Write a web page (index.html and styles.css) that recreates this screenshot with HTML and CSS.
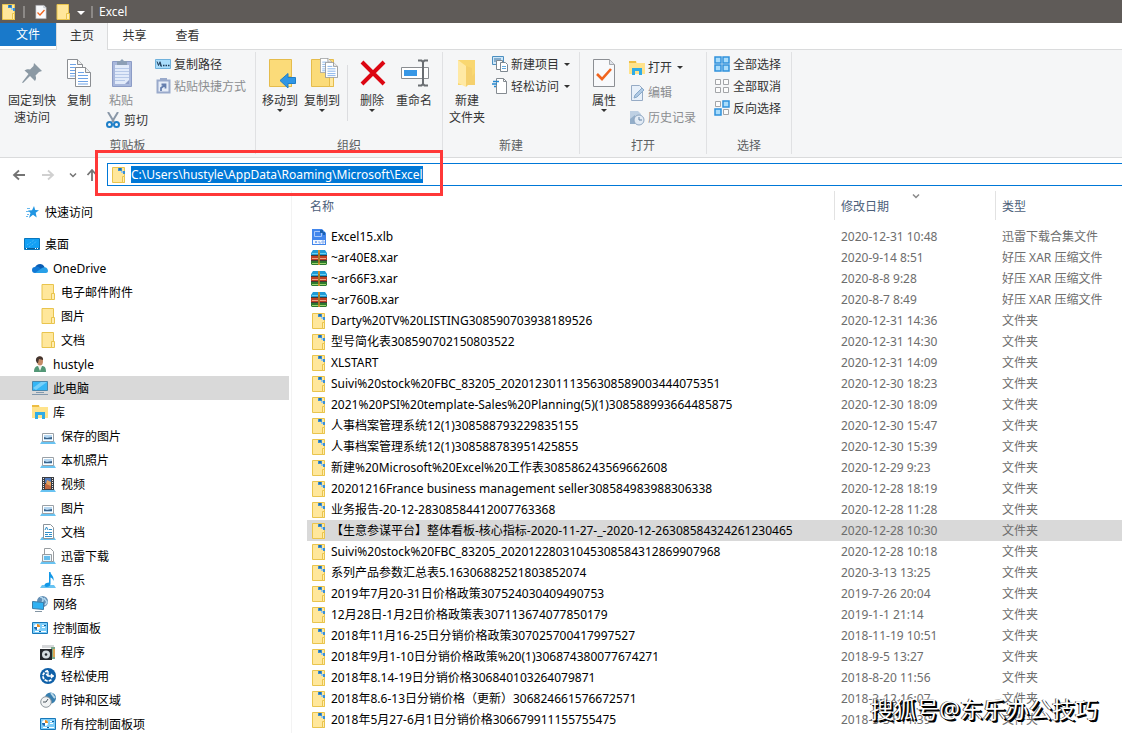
FILE: index.html
```html
<!DOCTYPE html>
<html lang="zh-CN">
<head>
<meta charset="utf-8">
<title>Excel</title>
<link rel="stylesheet" href="styles.css">
</head>
<body>
<svg class="sprite" aria-hidden="true">
  <symbol id="i-linkfolder" viewBox="0 0 16 16"><path d="M1.500.5h12v15h-12z" fill="#ffe79b" stroke="#e9c44d"/><path d="M11.500 9.500h2v6h-2z" fill="#ffedb0" stroke="#e9c44d"/><path d="M7 1h4v3H7z" fill="#3b8fd4"/><path d="M10 4h3v2h-3z" fill="#9cc9ea"/><path d="M12 4h2v3h-2z" fill="#3b8fd4"/><path d="M8 1h2v2H8z" fill="#1c6fb4"/></symbol>
  <symbol id="i-folder" viewBox="0 0 16 16"><path d="M2 .5h11.500v15H2z" fill="#ffe79b" stroke="#e9c44d"/><path d="M11.500 9.500h3v6h-3z" fill="#ffedb0" stroke="#e9c44d"/></symbol>
  <symbol id="i-props" viewBox="0 0 24 32"><path d="M1.500 2.500h16l5 5v22h-21z" fill="#f8f9fb" stroke="#8c8f94"/><path d="M17.500 2.500v5h5" fill="#dfe3ea" stroke="#a5a8ad"/><path d="M5 17l5 5L19 12" fill="none" stroke="#f0641e" stroke-width="2.600"/></symbol>
  <symbol id="i-pin" viewBox="0 0 24 24"><path d="M14 2l8 8-3 1-3.500 3.500c1 2.500.5 4-.5 5.500l-5-5L3 22l-1-.5L8.500 13 4.500 9.500C6.500 8 8.500 8 10 8.500L13.500 5z" fill="#8b99a4"/></symbol>
  <symbol id="i-page" viewBox="0 0 16 20"><path d="M.5.5h10l5 5v14H.5z" fill="#fff" stroke="#8b8e92"/><path d="M10.500.5v5h5" fill="#eee" stroke="#8b8e92"/><path d="M3 5.500h6M3 8.500h10M3 11.500h10M3 14.500h10M3 17h10" stroke="#6ea3e6"/></symbol>
  <symbol id="i-copy" viewBox="0 0 26 30"><use href="#i-page" x="1" y="1" width="16" height="20"/><use href="#i-page" x="9" y="9" width="16" height="20"/></symbol>
  <symbol id="i-paste" viewBox="0 0 22 30"><path d="M1.500 3.500h19v25h-19z" fill="#a9b8dc" stroke="#8c9cc6"/><path d="M4 7h14v19H4z" fill="#e2ebfa"/><path d="M4 10.500h14M4 13.500h14M4 16.500h14M4 19.500h14M4 22.500h10" stroke="#b7c9e8"/><path d="M14 26l4-4v4z" fill="#8f9fc9"/><path d="M6 3h3l2-2 2 2h3v4H6z" fill="#8c9fb6"/></symbol>
  <symbol id="i-cut" viewBox="0 0 14 16"><path d="M2 0l6 10M12 0L6 10" stroke="#8a98a8" stroke-width="2"/><circle cx="3.500" cy="12.500" r="2.500" fill="none" stroke="#1e7fc8" stroke-width="2"/><circle cx="10.500" cy="12.500" r="2.500" fill="none" stroke="#1e7fc8" stroke-width="2"/></symbol>
  <symbol id="i-path" viewBox="0 0 16 16"><path d="M.5 3.500h15v9H.5z" fill="#a9dcfb" stroke="#6fb1dc"/><path d="M2 5.500l1.500 4 1-3 1.500 4M5 5.500l1.500 5" fill="none" stroke="#1e3c5a"/><path d="M8 9.500h1.500M10.500 9.500H12M13 9.500h1.500" stroke="#1e3c5a" stroke-width="1.500"/></symbol>
  <symbol id="i-shortcut" viewBox="0 0 16 16"><path d="M2.500 2.500h12v12h-12z" fill="#e6edf8" stroke="#9aaacb" stroke-width="2"/><path d="M5 0h7v3H5z" fill="#9aaacb"/><path d="M6 13v-3l4-3M6.500 6.500h4v4" fill="none" stroke="#667fae" stroke-width="1.800"/></symbol>
  <symbol id="i-bigfolder" viewBox="0 0 28 32"><path d="M1.500 2.500h22v27h-22z" fill="#fbdb79" stroke="#e5bc4c"/><path d="M19.500 19.500h4v10h-4z" fill="#ffe89f" stroke="#e5bc4c"/></symbol>
  <symbol id="i-move" viewBox="0 0 28 32"><use href="#i-bigfolder" width="28" height="32"/><path d="M12 23.500l8-7v4h7.500v6H20v4.500z" fill="#3096e4" stroke="#207fc8"/></symbol>
  <symbol id="i-copyto" viewBox="0 0 28 32"><use href="#i-bigfolder" width="28" height="32"/><use href="#i-page" x="10" y="1" width="12" height="15"/><use href="#i-page" x="15" y="5" width="13" height="16"/></symbol>
  <symbol id="i-delete" viewBox="0 0 28 28"><path d="M3 3l22 22M25 3L3 25" stroke="#dc0612" stroke-width="4"/></symbol>
  <symbol id="i-rename" viewBox="0 0 30 30"><path d="M1.500 9.500h27v11h-27z" fill="#fff" stroke="#8a8d91"/><path d="M4 12h13v6H4z" fill="#3797e6"/><path d="M23 3v24M18 2.500h3.500L23 4l1.500-1.500H28M18 27.500h3.500L23 26l1.500 1.500H28" fill="none" stroke="#6a6e72" stroke-width="2"/></symbol>
  <symbol id="i-newfolder" viewBox="0 0 24 32"><path d="M3 3h17v25H3z" fill="#f9d771"/><path d="M3 3l8 6v21l-8-4z" fill="#ffe9a4"/><path d="M11 9v21l2-2h7V16l-3 3v-8z" fill="#f5d06d"/></symbol>
  <symbol id="i-newitem" viewBox="0 0 16 16"><path d="M.5.5h11v8H.5z" fill="#cfe8fa" stroke="#4c8fc0"/><path d="M2 3h7M2 5h5" stroke="#3b73a0"/><path d="M4.500 4.500h6v9h-6z" fill="#fff" stroke="#7d8790"/><path d="M8.500 6.500h5l2 2v7h-7z" fill="#fff" stroke="#7d8790"/><path d="M10 10.500h4M10 12.500h4" stroke="#61a9df"/></symbol>
  <symbol id="i-easy" viewBox="0 0 16 16"><path d="M4.500.5h7l3 3v12h-10z" fill="#fff" stroke="#858b91"/><path d="M11.500.5v3h3" fill="none" stroke="#858b91"/><path d="M1 3.500h6M0 6h5M2 8.500h2" stroke="#2688cf" stroke-width="1.500"/></symbol>
  <symbol id="i-library" viewBox="0 0 16 16"><path d="M0 1h7l1 2h8v11H0z" fill="#ffe38b"/><path d="M0 1h7v2H0z" fill="#edbd43"/><path d="M3 15V8h10v7h-3v-4H6v4z" fill="#2fabe6"/></symbol>
  <symbol id="i-edit" viewBox="0 0 16 16"><path d="M2.500.5h8l3 3v12h-11z" fill="#e7f0fa" stroke="#96abc5"/><path d="M5 13l1-3 7-7 2 2-7 7z" fill="#afc9e4" stroke="#88a9c9"/></symbol>
  <symbol id="i-history" viewBox="0 0 16 16"><path d="M1 1h8l3 3v9H1z" fill="#bed0e3"/><path d="M1 9l5-4v9H1z" fill="#93aec9"/><circle cx="10" cy="10" r="5" fill="#e2ebf5" stroke="#8ea6c1"/><path d="M10 7v3h3" fill="none" stroke="#6382a4"/></symbol>
  <symbol id="i-all" viewBox="0 0 16 16"><path d="M1 1h6v6H1zM9 1h6v6H9zM1 9h6v6H1zM9 9h6v6H9z" fill="#a9dcfb" stroke="#2f91dc" stroke-width="1.500"/></symbol>
  <symbol id="i-none" viewBox="0 0 16 16"><path d="M1.500 1.500h5v5h-5zM9.500 1.500h5v5h-5zM1.500 9.500h5v5h-5zM9.500 9.500h5v5h-5z" fill="#fcfcfc" stroke="#a3a5a8"/></symbol>
  <symbol id="i-invert" viewBox="0 0 16 16"><path d="M1.500 1.500h5v5h-5zM9.500 9.500h5v5h-5z" fill="#fcfcfc" stroke="#a3a5a8"/><path d="M9 1h6v6H9zM1 9h6v6H1z" fill="#a9dcfb" stroke="#2f91dc" stroke-width="1.500"/></symbol>
  <symbol id="i-left" viewBox="0 0 16 16"><path d="M14 8H3M8 3.500L3 8l5 4.500" fill="none" stroke="currentColor" stroke-width="1.800"/></symbol>
  <symbol id="i-down" viewBox="0 0 8 8"><path d="M1 2.500l3 3 3-3" fill="none" stroke="currentColor" stroke-width="1.500"/></symbol>
  <symbol id="i-star" viewBox="0 0 16 16"><path d="M10 2l1.200 4 3.800.3-3.300 2.500 1 4.700-3.700-2.700L5 14l1.500-5L4 6.500l4-.3z" fill="#2196e3"/><path d="M3 4.500h3M2 7.500h3M3 10.500h2M2 12.500h2" stroke="#67b8ed"/></symbol>
  <symbol id="i-desktop" viewBox="0 0 16 16"><path d="M.5 2.500h15v11H.5z" fill="#12a0f5" stroke="#0876bd"/><path d="M3 9l7-5M5 11l8-6" stroke="#55c0fb" stroke-dasharray="1 1"/><path d="M1 12.500h14" stroke="#0a5d99"/><path d="M2 12.500h1M11 12.500h1M13 12.500h1" stroke="#fff"/></symbol>
  <symbol id="i-cloud" viewBox="0 0 16 16"><path d="M3 9a5 5 0 0 1 9-3l1 3z" fill="#0a5db3"/><path d="M3 13a3 3 0 0 1 0-6c3-1 4 0 6 2l3 4z" fill="#1178d4"/><path d="M3 13l7-5c4-2 6 1 6 3 0 1-1 2-2 2z" fill="#28a0e8"/></symbol>
  <symbol id="i-user" viewBox="0 0 16 16"><path d="M2 16c0-5 2-6 5-6h3c3 0 4 2 4 6z" fill="#539776"/><path d="M6 10l2 5 2-5z" fill="#eef2ee"/><ellipse cx="8" cy="5" rx="3" ry="4.500" fill="#c48b68"/><path d="M4 5c-1-6 8-6 7-1L7 3 6 7H5z" fill="#45352e"/></symbol>
  <symbol id="i-pc" viewBox="0 0 16 16"><path d="M.5 1.500h15v9H.5z" fill="#35b6f6" stroke="#4a87ad"/><path d="M1 8l8-6h6L4 10z" fill="#75d0fb"/><path d="M4 12.500h8M0 14.500h16" stroke="#8298ad"/></symbol>
  <symbol id="i-base" viewBox="0 0 16 16"><path d="M2 13h12l2 3H0z" fill="#68c3f2"/></symbol>
  <symbol id="i-picture" viewBox="0 0 16 16"><use href="#i-base"/><path d="M2.500 5.500h11v8h-11z" fill="#fff" stroke="#9aa1a7"/><path d="M4 7h8v5H4z" fill="#b7d8f2"/><path d="M4 9l3 1 5-1v2H4z" fill="#3b6389"/></symbol>
  <symbol id="i-video" viewBox="0 0 16 16"><use href="#i-base"/><path d="M2 1h12v13H2z" fill="#3a3d42"/><path d="M5 2h6v5H5z" fill="#527bbd"/><path d="M5 8h6v5H5z" fill="#c1663e"/><path d="M7 4l4 2v4L6 8z" fill="#e5a05c"/><path d="M3.500 2v12M12.500 2v12" stroke="#eee" stroke-dasharray="1 1"/></symbol>
  <symbol id="i-doc" viewBox="0 0 16 16"><use href="#i-base"/><path d="M3.500.5h7l3 3v11h-10z" fill="#fff" stroke="#8b949b"/><path d="M5 6l1.500-3L8 6M9 5.500h3M5 8.500h7M5 10.500h3M9 10.500h3M5 12.500h7" fill="none" stroke="#2f8ec9"/></symbol>
  <symbol id="i-download" viewBox="0 0 16 16"><use href="#i-base"/><path d="M4.500.5h6l3 3v10h-9z" fill="#fff" stroke="#989da1"/><path d="M2.500 6.500h9v7h-9z" fill="#e9f5fc" stroke="#989da1"/><path d="M4 8h6v4H4z" fill="#65bdec"/></symbol>
  <symbol id="i-music" viewBox="0 0 16 16"><use href="#i-base"/><path d="M9 0h1.500c0 3 4 4 3 9-1-3-2-3-3-3.500V12c0 2-2 3-4 3s-3-3 0-4l2.500-.5z" fill="#1398e7"/></symbol>
  <symbol id="i-network" viewBox="0 0 16 16"><circle cx="10.500" cy="5.500" r="5.500" fill="#638eb4"/><path d="M8 1c3 0 4 3 2 5M12 2l3 4-2 3" fill="none" stroke="#b4d9ef" stroke-width="1.500"/><path d="M.5 5.500l11 1v7l-11-1z" fill="#31b2f3" stroke="#3c7ea8"/><path d="M3 15.500h7" stroke="#8395a3"/></symbol>
  <symbol id="i-control" viewBox="0 0 16 16"><path d="M.5 2.500h15v11H.5z" fill="#7dcdf9" stroke="#1878b9"/><circle cx="5" cy="7" r="3" fill="#fff"/><path d="M5 7V4a3 3 0 0 1 3 3z" fill="#e98c1f"/><path d="M5 7v3a3 3 0 0 1-3-3z" fill="#196ab2"/><path d="M10 5.500h4M10 7.500h3M3 11.500h4M9 11.500h5" stroke="#fff"/><path d="M12 5.500h2M7 11.500h2" stroke="#125d99"/></symbol>
  <symbol id="i-program" viewBox="0 0 16 16"><path d="M2 1h12v3H2z" fill="#d6d8da"/><path d="M11 3h4v12h-4z" fill="#7ba88a"/><path d="M13 5h2v8h-2z" fill="#dfa855"/><path d="M0 5h12v11H0z" fill="#24272b"/><circle cx="6" cy="10.500" r="4" fill="#d6dde1"/><circle cx="6" cy="10.500" r="1.300" fill="#24272b"/></symbol>
  <symbol id="i-access" viewBox="0 0 16 16"><circle cx="8" cy="8" r="8" fill="#0f60a8"/><path d="M8 3a5 5 0 1 0 4 8" fill="none" stroke="#fff" stroke-width="1.800" stroke-dasharray="3 1"/><path d="M8 3v5h6M11 6l2 2-2 2M6 6l2 2" fill="none" stroke="#fff" stroke-width="1.300"/></symbol>
  <symbol id="i-clock" viewBox="0 0 16 16"><circle cx="10.500" cy="6" r="5.500" fill="#377eaf"/><path d="M11 1c2 2 2 3 4 5" fill="none" stroke="#b9d8e9" stroke-width="2"/><circle cx="6" cy="10" r="5.300" fill="#f1f3f4" stroke="#8c969d"/><path d="M8 7l-2 3H3" fill="none" stroke="#4b555d"/></symbol>
  <symbol id="i-xlb" viewBox="0 0 16 16"><path d="M1 0h10l4 4v12H1z" fill="#4286ec"/><path d="M3.500 2.500h7v5h-7z" fill="none" stroke="#a9c9fb"/><path d="M9 1h3v2h2v3h-2V4H9z" fill="#1c61ae"/><path d="M2 11h12v4H2z" fill="#f2f7ff"/><path d="M4 12l2 2m0-2l-2 2M8 12v2h2M11 12v2h2v-2z" fill="none" stroke="#8ab0ee"/></symbol>
  <symbol id="i-archive" viewBox="0 0 16 16"><path d="M2 0h12l2 3v3H0V3z" fill="#209ad6"/><path d="M0 6h16v5H0z" fill="#bd3f24"/><path d="M0 11h16v3l-1 1H1l-1-1z" fill="#2e792d"/><path d="M1 3.500h14" stroke="#68d1f1"/><path d="M1 8.500h14" stroke="#eea284"/><path d="M1 13.500h14" stroke="#9bd46d"/><path d="M0 5.500h16M0 10.500h16" stroke="#423a34"/><path d="M7 0h2v15H7z" fill="#c9902d"/><path d="M8 3v10" stroke="#8a5e1c"/></symbol>
</svg>

<div class="window">
  <header class="titlebar">
    <svg class="ico"><use href="#i-linkfolder"/></svg>
    <span class="grip"></span>
    <button class="quick" aria-label="属性"><svg class="ico"><use href="#i-props"/></svg></button>
    <button class="quick" aria-label="新建文件夹"><svg class="ico"><use href="#i-folder"/></svg></button>
    <button class="custom" aria-label="自定义快速访问工具栏"><i class="caret"></i></button>
    <span class="grip"></span>
    <h1 class="title">Excel</h1>
  </header>

  <div class="tabs">
    <button class="tab file">文件</button>
    <button class="tab active">主页</button>
    <button class="tab">共享</button>
    <button class="tab">查看</button>
  </div>

  <div class="ribbon">
    <section class="group clipboard">
      <div class="tools">
        <button class="big"><svg class="art"><use href="#i-pin" x="4" y="4" width="24" height="24"/></svg>固定到快<br>速访问</button>
        <button class="big"><svg class="art"><use href="#i-copy" x="3" y="1" width="26" height="30"/></svg>复制</button>
        <div class="pastes">
          <button class="big off"><svg class="art"><use href="#i-paste" x="6" y="1" width="22" height="30"/></svg>粘贴</button>
          <button class="small"><svg class="ico"><use href="#i-cut"/></svg>剪切</button>
        </div>
        <div class="stack">
          <button class="small"><svg class="ico"><use href="#i-path"/></svg>复制路径</button>
          <button class="small off"><svg class="ico"><use href="#i-shortcut"/></svg>粘贴快捷方式</button>
        </div>
      </div>
      <h2 class="caption">剪贴板</h2>
    </section>
    <section class="group organize">
      <div class="tools">
        <button class="big"><svg class="art"><use href="#i-move" x="4" width="28" height="32"/></svg>移动到<i class="caret"></i></button>
        <button class="big"><svg class="art"><use href="#i-copyto" x="4" width="28" height="32"/></svg>复制到<i class="caret"></i></button>
        <span class="divider"></span>
        <button class="big"><svg class="art"><use href="#i-delete" x="3" y="2" width="28" height="28"/></svg>删除<i class="caret"></i></button>
        <button class="big"><svg class="art"><use href="#i-rename" x="2" y="1" width="30" height="30"/></svg>重命名</button>
      </div>
      <h2 class="caption">组织</h2>
    </section>
    <section class="group create">
      <div class="tools">
        <button class="big"><svg class="art"><use href="#i-newfolder" x="4" width="24" height="32"/></svg>新建<br>文件夹</button>
        <div class="stack">
          <button class="small"><svg class="ico"><use href="#i-newitem"/></svg>新建项目<i class="caret"></i></button>
          <button class="small"><svg class="ico"><use href="#i-easy"/></svg>轻松访问<i class="caret"></i></button>
        </div>
      </div>
      <h2 class="caption">新建</h2>
    </section>
    <section class="group open">
      <div class="tools">
        <button class="big"><svg class="art"><use href="#i-props" x="4" width="24" height="32"/></svg>属性<i class="caret"></i></button>
        <div class="stack loose">
          <button class="small"><svg class="ico"><use href="#i-library"/></svg>打开<i class="caret"></i></button>
          <button class="small off"><svg class="ico"><use href="#i-edit"/></svg>编辑</button>
          <button class="small off"><svg class="ico"><use href="#i-history"/></svg>历史记录</button>
        </div>
      </div>
      <h2 class="caption">打开</h2>
    </section>
    <section class="group select">
      <div class="tools">
        <div class="stack">
          <button class="small"><svg class="ico"><use href="#i-all"/></svg>全部选择</button>
          <button class="small"><svg class="ico"><use href="#i-none"/></svg>全部取消</button>
          <button class="small"><svg class="ico"><use href="#i-invert"/></svg>反向选择</button>
        </div>
      </div>
      <h2 class="caption">选择</h2>
    </section>
  </div>

  <div class="navbar">
    <div class="history">
      <button class="go" aria-label="后退"><svg class="ico"><use href="#i-left"/></svg></button>
      <button class="go off" aria-label="前进"><svg class="ico flip"><use href="#i-left"/></svg></button>
      <button class="go recent" aria-label="最近浏览的位置"><svg class="mini"><use href="#i-down"/></svg></button>
      <button class="go" aria-label="上移"><svg class="ico up"><use href="#i-left"/></svg></button>
    </div>
    <div class="address">
      <svg class="ico"><use href="#i-linkfolder"/></svg>
      <input class="path" type="text" aria-label="地址" value="C:\Users\hustyle\AppData\Roaming\Microsoft\Excel">
    </div>
    <div class="marker"></div>
  </div>

  <div class="content">
    <nav class="tree" aria-label="导航窗格">
      <a class="node root quickaccess" href="#"><svg class="ico"><use href="#i-star"/></svg>快速访问</a>
      <a class="node root" href="#"><svg class="ico"><use href="#i-desktop"/></svg>桌面</a>
      <a class="node" href="#"><svg class="ico"><use href="#i-cloud"/></svg>OneDrive</a>
      <a class="node sub" href="#"><svg class="ico"><use href="#i-folder"/></svg>电子邮件附件</a>
      <a class="node sub" href="#"><svg class="ico"><use href="#i-folder"/></svg>图片</a>
      <a class="node sub" href="#"><svg class="ico"><use href="#i-folder"/></svg>文档</a>
      <a class="node" href="#"><svg class="ico"><use href="#i-user"/></svg>hustyle</a>
      <a class="node current" href="#"><svg class="ico"><use href="#i-pc"/></svg>此电脑</a>
      <a class="node" href="#"><svg class="ico"><use href="#i-library"/></svg>库</a>
      <a class="node sub" href="#"><svg class="ico"><use href="#i-picture"/></svg>保存的图片</a>
      <a class="node sub" href="#"><svg class="ico"><use href="#i-picture"/></svg>本机照片</a>
      <a class="node sub" href="#"><svg class="ico"><use href="#i-video"/></svg>视频</a>
      <a class="node sub" href="#"><svg class="ico"><use href="#i-picture"/></svg>图片</a>
      <a class="node sub" href="#"><svg class="ico"><use href="#i-doc"/></svg>文档</a>
      <a class="node sub" href="#"><svg class="ico"><use href="#i-download"/></svg>迅雷下载</a>
      <a class="node sub" href="#"><svg class="ico"><use href="#i-music"/></svg>音乐</a>
      <a class="node" href="#"><svg class="ico"><use href="#i-network"/></svg>网络</a>
      <a class="node" href="#"><svg class="ico"><use href="#i-control"/></svg>控制面板</a>
      <a class="node sub" href="#"><svg class="ico"><use href="#i-program"/></svg>程序</a>
      <a class="node sub" href="#"><svg class="ico"><use href="#i-access"/></svg>轻松使用</a>
      <a class="node sub" href="#"><svg class="ico"><use href="#i-clock"/></svg>时钟和区域</a>
      <a class="node sub" href="#"><svg class="ico"><use href="#i-control"/></svg>所有控制面板项</a>
    </nav>

    <main class="files">
      <table class="list">
        <colgroup><col class="c-name"><col class="c-date"><col></colgroup>
        <thead>
          <tr><th><div class="head first">名称</div></th><th><div class="head">修改日期<svg class="sort"><use href="#i-down"/></svg></div></th><th><div class="head">类型</div></th></tr>
        </thead>
        <tbody>
          <tr><td><svg class="ico"><use href="#i-xlb"/></svg>Excel15.xlb</td><td>2020-12-31 10:48</td><td>迅雷下载合集文件</td></tr>
          <tr><td><svg class="ico"><use href="#i-archive"/></svg>~ar40E8.xar</td><td>2020-9-14 8:51</td><td>好压 XAR 压缩文件</td></tr>
          <tr><td><svg class="ico"><use href="#i-archive"/></svg>~ar66F3.xar</td><td>2020-8-8 9:28</td><td>好压 XAR 压缩文件</td></tr>
          <tr><td><svg class="ico"><use href="#i-archive"/></svg>~ar760B.xar</td><td>2020-8-7 8:49</td><td>好压 XAR 压缩文件</td></tr>
          <tr><td><svg class="ico"><use href="#i-linkfolder"/></svg>Darty%20TV%20LISTING308590703938189526</td><td>2020-12-31 14:36</td><td>文件夹</td></tr>
          <tr><td><svg class="ico"><use href="#i-linkfolder"/></svg>型号简化表308590702150803522</td><td>2020-12-31 14:30</td><td>文件夹</td></tr>
          <tr><td><svg class="ico"><use href="#i-linkfolder"/></svg>XLSTART</td><td>2020-12-31 14:09</td><td>文件夹</td></tr>
          <tr><td><svg class="ico"><use href="#i-linkfolder"/></svg>Suivi%20stock%20FBC_83205_20201230111356308589003444075351</td><td>2020-12-30 18:23</td><td>文件夹</td></tr>
          <tr><td><svg class="ico"><use href="#i-linkfolder"/></svg>2021%20PSI%20template-Sales%20Planning(5)(1)308588993664485875</td><td>2020-12-30 18:09</td><td>文件夹</td></tr>
          <tr><td><svg class="ico"><use href="#i-linkfolder"/></svg>人事档案管理系统12(1)308588793229835155</td><td>2020-12-30 15:47</td><td>文件夹</td></tr>
          <tr><td><svg class="ico"><use href="#i-linkfolder"/></svg>人事档案管理系统12(1)308588783951425855</td><td>2020-12-30 15:39</td><td>文件夹</td></tr>
          <tr><td><svg class="ico"><use href="#i-linkfolder"/></svg>新建%20Microsoft%20Excel%20工作表308586243569662608</td><td>2020-12-29 9:23</td><td>文件夹</td></tr>
          <tr><td><svg class="ico"><use href="#i-linkfolder"/></svg>20201216France business management seller308584983988306338</td><td>2020-12-28 18:19</td><td>文件夹</td></tr>
          <tr><td><svg class="ico"><use href="#i-linkfolder"/></svg>业务报告-20-12-28308584412007763368</td><td>2020-12-28 11:28</td><td>文件夹</td></tr>
          <tr class="picked"><td><svg class="ico"><use href="#i-linkfolder"/></svg>【生意参谋平台】整体看板-核心指标-2020-11-27-_-2020-12-26308584324261230465</td><td>2020-12-28 10:30</td><td>文件夹</td></tr>
          <tr><td><svg class="ico"><use href="#i-linkfolder"/></svg>Suivi%20stock%20FBC_83205_20201228031045308584312869907968</td><td>2020-12-28 10:18</td><td>文件夹</td></tr>
          <tr><td><svg class="ico"><use href="#i-linkfolder"/></svg>系列产品参数汇总表5.16306882521803852074</td><td>2020-3-13 13:25</td><td>文件夹</td></tr>
          <tr><td><svg class="ico"><use href="#i-linkfolder"/></svg>2019年7月20-31日价格政策307524030409490753</td><td>2019-7-26 20:04</td><td>文件夹</td></tr>
          <tr><td><svg class="ico"><use href="#i-linkfolder"/></svg>12月28日-1月2日价格政策表307113674077850179</td><td>2019-1-1 21:14</td><td>文件夹</td></tr>
          <tr><td><svg class="ico"><use href="#i-linkfolder"/></svg>2018年11月16-25日分销价格政策307025700417997527</td><td>2018-11-19 10:51</td><td>文件夹</td></tr>
          <tr><td><svg class="ico"><use href="#i-linkfolder"/></svg>2018年9月1-10日分销价格政策%20(1)306874380077674271</td><td>2018-9-5 13:27</td><td>文件夹</td></tr>
          <tr><td><svg class="ico"><use href="#i-linkfolder"/></svg>2018年8.14-19日分销价格306840103264079871</td><td>2018-8-20 11:56</td><td>文件夹</td></tr>
          <tr><td><svg class="ico"><use href="#i-linkfolder"/></svg>2018年8.6-13日分销价格（更新）306824661576672571</td><td>2018-3-12 16:07</td><td>文件夹</td></tr>
          <tr><td><svg class="ico"><use href="#i-linkfolder"/></svg>2018年5月27-6月1日分销价格306679911155755475</td><td>2018-5-31 11:39</td><td>文件夹</td></tr>
        </tbody>
      </table>
    </main>
  </div>
  <div class="watermark">搜狐号@东乐办公技巧</div>
</div>
</body>
</html>
```

FILE: styles.css
```css
* { box-sizing: border-box; }
body {
  margin: 0;
  font: 12px/17px "Noto Sans", "Noto Sans CJK SC", sans-serif;
  color: #000;
  background: #fff;
}
button {
  font: inherit;
  color: inherit;
  border: 0;
  padding: 0;
  background: none;
}
.sprite { display: none; }
.window {
  position: relative;
  display: flex;
  flex-direction: column;
  height: 100vh;
  overflow: hidden;
}
.ico { width: 16px; height: 16px; flex: none; }
.caret {
  width: 0;
  height: 0;
  border: 3px solid transparent;
  border-top-color: currentColor;
  border-bottom: 0;
}

.titlebar {
  display: flex;
  align-items: center;
  flex: none;
  height: 23px;
  padding-left: 1px;
  background: #5f5b58;
  color: #fff;
}
.grip { width: 2px; height: 12px; margin: 0 8px 0 6px; background: #8c8986; }
.quick { display: flex; margin-right: 6px; }
.custom { display: flex; padding-top: 2px; }
.custom .caret { border-width: 4px 4px 0; }
.title { margin: 0 0 0 -2px; font-size: 12px; font-weight: 400; }

.tabs {
  display: flex;
  flex: none;
  height: 27px;
  border-bottom: 1px solid #dadbdc;
  color: #333;
}
.tab { width: 53px; height: 24px; }
.tab.file { width: 56px; height: 23px; background: #1979ca; color: #fff; }
.tab.active {
  width: 52px;
  height: 27px;
  padding-bottom: 3px;
  border: 1px solid #dadbdc;
  border-width: 0 1px;
  background: #f5f6f7;
}

.ribbon {
  display: flex;
  flex: none;
  height: 108px;
  padding: 2px 0 3px;
  background: #f5f6f7;
  border-bottom: 1px solid #dadbdc;
  color: #333;
}
.group {
  display: flex;
  flex-direction: column;
  justify-content: space-between;
  border-right: 1px solid #e0e1e3;
}
.clipboard { width: 256px; }
.organize { width: 187px; }
.create { width: 137px; }
.open { width: 127px; }
.select { width: 85px; }
.tools { display: flex; align-items: flex-start; gap: 7px; padding: 1px 0 0 6px; }
.clipboard .tools, .open .tools { padding-left: 8px; }
.select .tools { padding-left: 7px; }
.organize .tools { gap: 6px; }
.caption {
  margin: 0;
  font-size: 12px;
  font-weight: 400;
  text-align: center;
  color: #5c5f62;
}
.big {
  display: flex;
  flex-direction: column;
  align-items: center;
  min-width: 32px;
  padding-top: 4px;
  text-align: center;
  white-space: nowrap;
}
.organize .big { min-width: 36px; }
.big .art { width: 32px; height: 32px; margin-bottom: 3px; }
.off { color: #8b8d90; }
.pastes { display: flex; flex-direction: column; align-items: flex-start; margin-left: 3px; }
.stack { display: flex; flex-direction: column; align-items: flex-start; }
.small { display: flex; align-items: center; gap: 3px; height: 22px; white-space: nowrap; }
.small .caret { margin-left: 2px; }
.loose { padding: 2px 0 0 2px; }
.loose .small { height: 25px; }
.divider { width: 1px; height: 56px; margin: 12px 0 0 1px; background: #dcdde0; }

.navbar {
  position: relative;
  display: flex;
  flex: none;
  height: 33px;
  padding: 5px 0;
}
.history {
  display: flex;
  align-items: center;
  width: 107px;
  padding-left: 11px;
  gap: 13px;
  color: #747474;
}
.go { display: flex; }
.go.off { color: #d0d0d0; }
.recent { margin-right: -6px; }
.mini { width: 8px; height: 8px; }
.flip { transform: rotate(180deg); }
.up { transform: rotate(90deg); }
.address {
  display: flex;
  flex: 1;
  align-items: center;
  gap: 4px;
  padding-left: 3px;
  border: 1px solid #0078d7;
  border-right: 0;
}
.path {
  field-sizing: content;
  height: 17px;
  padding: 0;
  border: 0;
  font: inherit;
  color: #fff;
  background: #0078d7;
}
.marker {
  position: absolute;
  left: 95px;
  top: -8px;
  width: 348px;
  height: 46px;
  border: 3px solid #ff3838;
}

.content { display: flex; flex: 1; min-height: 0; overflow: hidden; }
.tree {
  flex: none;
  width: 292px;
  padding: 9px 2px 0 0;
  border-right: 1px solid #f3f3f3;
}
.node {
  display: flex;
  align-items: center;
  gap: 5px;
  height: 24px;
  padding-left: 32px;
  color: #000;
  text-decoration: none;
}
.root { padding-left: 24px; }
.sub { padding-left: 40px; }
.quickaccess { margin-bottom: 8px; }
.current { background: #d9d9d9; }

.files { flex: 1; min-width: 0; padding-left: 15px; }
.list { width: 100%; table-layout: fixed; border-collapse: collapse; }
.c-name { width: 527px; }
.c-date { width: 161px; }
.list th { height: 35px; padding: 0; font-weight: 400; text-align: left; vertical-align: top; }
.head {
  position: relative;
  height: 29px;
  padding: 7px 0 0 6px;
  border-left: 1px solid #e2e2e2;
  color: #4c607a;
}
.head.first { padding-left: 3px; border-left: 0; }
.sort { position: absolute; left: 77px; top: 1px; width: 8px; height: 8px; color: #8a8a8a; }
.list td { height: 21px; padding: 0 0 0 7px; color: #6d6d6d; white-space: nowrap; }
.list td:first-child { padding-left: 4px; color: #000; }
.list td .ico { margin-right: 4px; vertical-align: middle; }
.picked { background: #d9d9d9; }

.watermark {
  position: absolute;
  right: 24px;
  bottom: 8px;
  font-size: 23px;
  line-height: 32px;
  font-weight: 400;
  color: #fff;
  text-shadow: 1px 1px 0 #000, 2px 2px 0 #000, -1px 0 0 #555;
}
```
